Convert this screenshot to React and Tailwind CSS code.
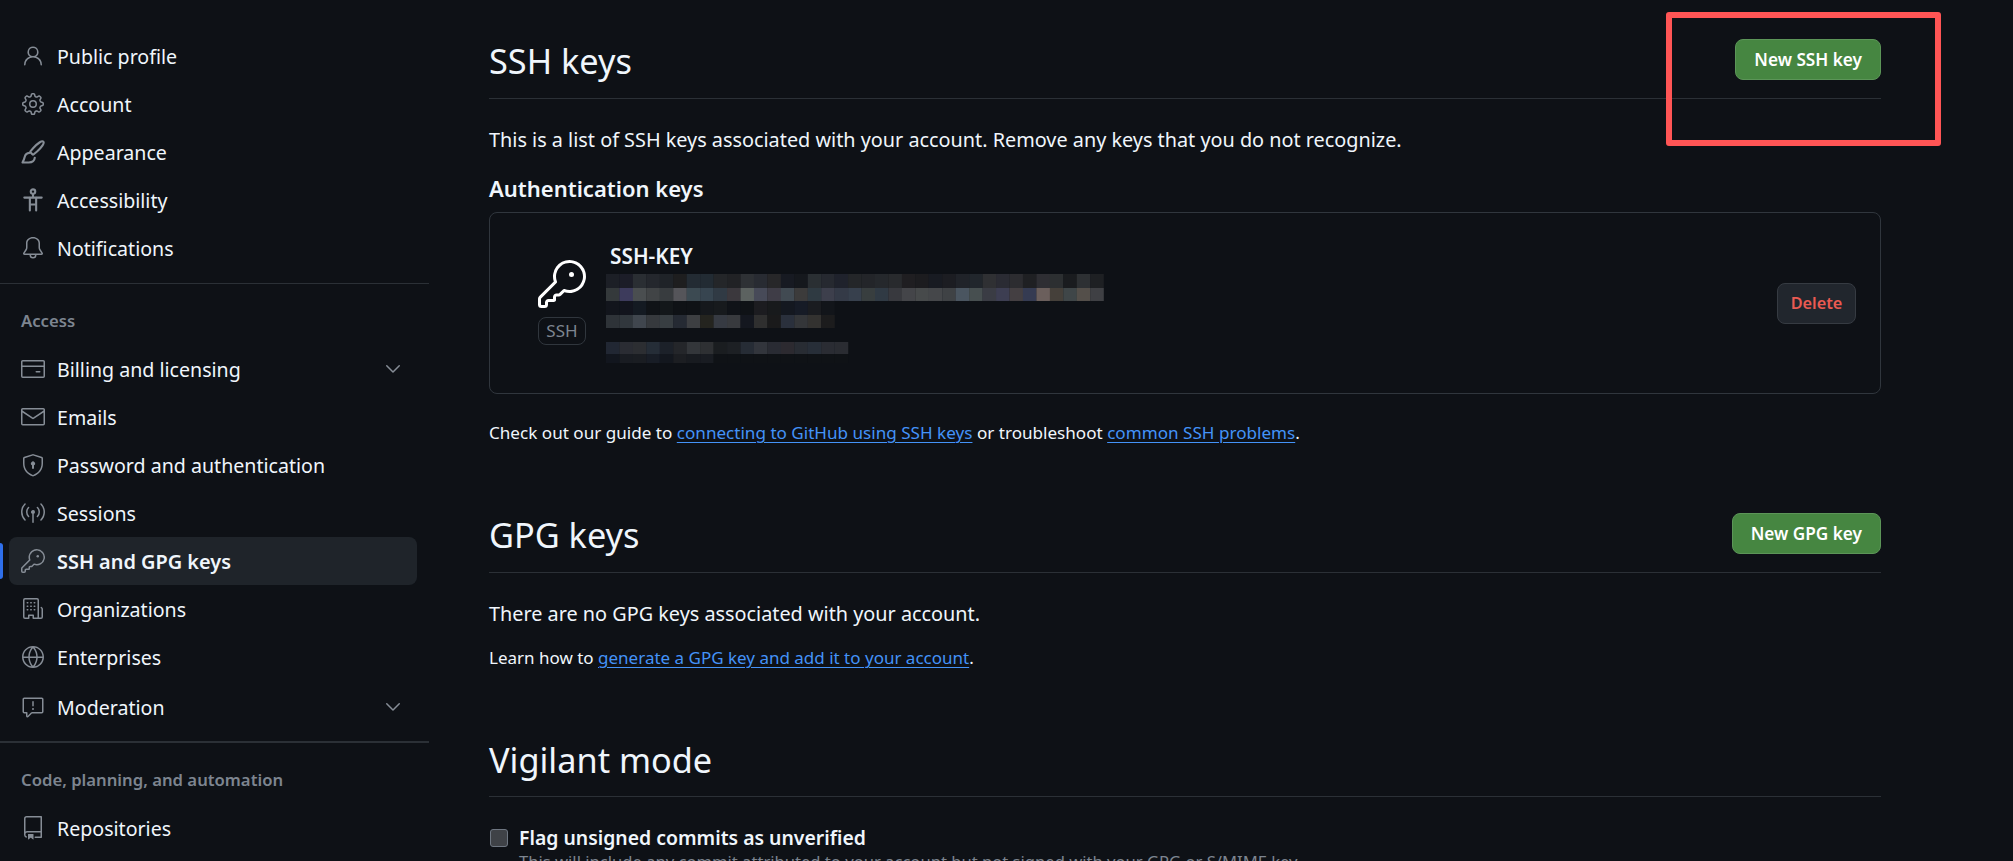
import { GoPerson, GoGear, GoBell, GoCreditCard, GoMail, GoShieldLock, GoBroadcast, GoKey, GoOrganization, GoGlobe, GoReport, GoRepo, GoChevronDown } from 'react-icons/go';

function PaintbrushIcon({ size, className }) {
  return (
    <svg width={size} height={size} viewBox="0 0 16 16" fill="none" stroke="currentColor" strokeWidth="1.4" strokeLinejoin="round" strokeLinecap="round" className={className}>
      <path d="M14.9 1.1c-.9-.9-3.7 1-6.7 4.2L6.4 7.4c-.3.4-.2.7 0 .9l1.2 1.2c.2.2.5.3.9 0l2.2-1.8c3.3-3 5.1-5.7 4.2-6.6Z" />
      <path d="M5.6 8.6c-1.9.2-2.8 1.2-3.2 2.9-.2 1-.6 2-1.4 3.5h4.2c2.4 0 3.8-1.3 4-3.2" />
    </svg>
  );
}

function AccessibilityIcon({ size, className }) {
  return (
    <svg width={size} height={size} viewBox="0 0 16 16" fill="none" stroke="currentColor" strokeWidth="1.4" strokeLinecap="round" className={className}>
      <circle cx="8" cy="2.4" r="1.5" />
      <path d="M2.2 6.4h11.6" />
      <path d="M5.9 6.6V15M10.1 6.6V15M5.9 11h4.2M8 4.2v2" />
    </svg>
  );
}

const TOP_ITEMS = [
  { label: 'Public profile', icon: GoPerson },
  { label: 'Account', icon: GoGear },
  { label: 'Appearance', icon: PaintbrushIcon },
  { label: 'Accessibility', icon: AccessibilityIcon },
  { label: 'Notifications', icon: GoBell },
];

const ACCESS_ITEMS = [
  { label: 'Billing and licensing', icon: GoCreditCard, chevron: true },
  { label: 'Emails', icon: GoMail },
  { label: 'Password and authentication', icon: GoShieldLock },
  { label: 'Sessions', icon: GoBroadcast },
  { label: 'SSH and GPG keys', icon: GoKey, active: true },
  { label: 'Organizations', icon: GoOrganization },
  { label: 'Enterprises', icon: GoGlobe },
  { label: 'Moderation', icon: GoReport, chevron: true, extra: 'mt-[2px]' },
];

// pixelated (redacted) key details
const BLUR_ROWS = [
  { y: 0, h: 14, colors: ['#1c1f26','#1c1d28','#2a2e33','#24272d','#1f2328','#1e1e1f','#232b33','#222b33','#242629','#212225','#2e3135','#282b32','#272729','#171a22','#15181d','#2a2f33','#262930','#1f222c','#242629','#232529','#25282c','#282a2d','#1f1e21','#1c1c1f','#181b22','#1c1d22','#202329','#21262c','#2f3033','#2a2b33','#2c2c30','#1f2023','#2e2e33','#2c2f31','#1a1c1f','#2d3033','#1e2023'] },
  { y: 14, h: 13, colors: ['#34393b','#3d3b5c','#4a4e50','#414446','#383c3f','#55555a','#3c4a52','#374550','#303a44','#3b383d','#5c6260','#474a58','#3f3d47','#414a52','#3c3b3b','#2f3a42','#3d3f4c','#343a47','#37404d','#383e3f','#303a44','#38393e','#444549','#474a4b','#45474a','#3f4245','#4a5560','#474f50','#3a3c44','#3d3e52','#443f42','#353b52','#6b5f5c','#45403a','#3f4648','#544f4a','#3f4044'] },
  { y: 27, h: 14, colors: ['#12151c','#12141d','#141a22','#101317','#13171a','#0f1216','#0f1216','#15181c','#171a1d','#101318','#0f1216','#1c1c20','#181a1c','#141820','#161b26','#1a1c20','#12151a'] },
  { y: 41, h: 13, colors: ['#2e3338','#31373d','#40464e','#36393d','#383e42','#252a33','#3d3f42','#24241f','#363a42','#383a3e','#14171f','#2f2f2f','#1a1a1b','#2a303c','#343639','#333230','#1c1c1d'] },
  { y: 68, h: 12, colors: ['#212733','#2a2c33','#2c2e32','#252d37','#1c2129','#24262a','#33363a','#2e3033','#1a1d20','#1d2024','#262c35','#32353c','#292b33','#2c2a30','#282c33','#272e38','#2a2c33','#2a2c32'] },
  { y: 80, h: 9, colors: ['#12161e','#191c22','#1a1d22','#181d26','#13171e','#1c1e22','#181b20','#191c22','#0f1216','#0f1216','#0f1216','#0f1216','#0f1216','#0f1216','#0f1216','#0f1216','#0f1216','#0f1216'] },
];

function NavItem({ item }) {
  const Icon = item.icon;
  return (
    <div className={`relative h-12 pl-[9px] pr-3 flex items-center ${item.extra || ''}`}>
      {item.active && <div className="absolute left-0 top-[6px] bottom-[6px] w-[3px] rounded-r bg-[#2f6feb]" />}
      <div className={`flex-1 h-12 rounded-lg flex items-center pl-3 pr-3 ${item.active ? 'bg-[#1f242a] font-semibold text-[19.9px]' : ''}`}>
        <Icon size={24} className="text-[#868d96] shrink-0" />
        <span className="ml-3 mt-[2px] flex-1 whitespace-nowrap">{item.label}</span>
        {item.chevron && <GoChevronDown size={24} className="text-[#868d96]" />}
      </div>
    </div>
  );
}

function SectionHeader({ title, children, className = '' }) {
  return (
    <div className={`flex items-center justify-between border-b border-[#2b3036] ${className}`}>
      <h2 className="text-[34.3px] leading-[41px] font-normal relative top-[1px]">{title}</h2>
      {children}
    </div>
  );
}

function GreenButton({ children }) {
  return (
    <button className="h-[41px] px-[18px] rounded-lg bg-[#468641] border border-[#5c9558] text-white text-[17.2px] font-semibold whitespace-nowrap">
      {children}
    </button>
  );
}

function Link({ children }) {
  return <a className="text-[#4493f8] underline underline-offset-[3px] decoration-1">{children}</a>;
}

function App() {
  return (
    <div className="relative h-[861px] overflow-hidden bg-[#0e1116] text-[#f0f6fc] text-[19.6px] font-['Noto_Sans',sans-serif] flex">
      <aside className="w-[429px] shrink-0 pt-8">
        {TOP_ITEMS.map((item) => <NavItem key={item.label} item={item} />)}
        <div className="mt-[11px] border-t border-[#2b3036]" />
        <div className="mt-[27px] mb-[14px] pl-[21px] text-[16.7px] leading-[20px] font-semibold text-[#7d8590]">Access</div>
        {ACCESS_ITEMS.map((item) => <NavItem key={item.label} item={item} />)}
        <div className="mt-[10px] border-t-2 border-[#2b3036]" />
        <div className="mt-[27px] mb-[14px] pl-[21px] text-[16.7px] leading-[20px] font-semibold text-[#7d8590]">Code, planning, and automation</div>
        <NavItem item={{ label: 'Repositories', icon: GoRepo }} />
      </aside>

      <main className="ml-[60px] w-[1392px] shrink-0">
        <SectionHeader title="SSH keys" className="pt-[39px] pb-[18px]">
          <GreenButton>New SSH key</GreenButton>
        </SectionHeader>
        <p className="mt-[29px] text-[19.84px] leading-[24px]">This is a list of SSH keys associated with your account. Remove any keys that you do not recognize.</p>
        <h3 className="mt-[22px] text-[22px] leading-[28px] font-semibold">Authentication keys</h3>

        <div className="mt-[10px] h-[182px] rounded-lg border border-[#30363d] flex items-start">
          <div className="ml-[48px] mt-[47px] w-[48px] flex flex-col items-center">
            <GoKey size={48} className="text-white" />
            <span className="mt-[9px] w-[48px] h-[28px] flex items-center justify-center rounded-lg border border-[#30363d] text-[17px] text-[#7d8590]">SSH</span>
          </div>
          <div className="ml-[20px] mt-[31px] flex-1">
            <div className="ml-[4px] text-[20.8px] leading-[24px] font-semibold">SSH-KEY</div>
            <svg width="498" height="90" className="block mt-[6px]">
              {BLUR_ROWS.map((row) =>
                row.colors.map((c, i) => (
                  <rect key={`${row.y}-${i}`} x={i * 13.45} y={row.y} width="13.6" height={row.h} fill={c} />
                ))
              )}
            </svg>
          </div>
          <button className="mt-[70px] mr-6 w-[79px] h-[41px] rounded-lg bg-[#21262d] border border-[#363b42] text-[#ea5a52] text-[16.3px] font-semibold">Delete</button>
        </div>

        <p className="mt-[27px] text-[17.1px] leading-[24px]">
          Check out our guide to <Link>connecting to GitHub using SSH keys</Link> or troubleshoot <Link>common SSH problems</Link>.
        </p>

        <SectionHeader title="GPG keys" className="mt-[68px] pb-[18px]">
          <GreenButton>New GPG key</GreenButton>
        </SectionHeader>
        <p className="mt-[29px] text-[19.84px] leading-[24px]">There are no GPG keys associated with your account.</p>
        <p className="mt-[20px] text-[17px] leading-[24px]">
          Learn how to <Link>generate a GPG key and add it to your account</Link>.
        </p>

        <SectionHeader title="Vigilant mode" className="mt-[68px] pb-[17px]" />
        <div className="mt-[29px] flex items-center">
          <span className="ml-px w-[18px] h-[18px] rounded-[3px] bg-[#3f4247] border border-[#6e7681]" />
          <span className="ml-[11px] text-[19.4px] leading-[24px] font-semibold">Flag unsigned commits as unverified</span>
        </div>
        <p className="mt-[2px] ml-[30px] text-[16.6px] leading-[20px] text-[#7d8590] whitespace-nowrap">This will include any commit attributed to your account but not signed with your GPG or S/MIME key.</p>
      </main>

      {/* red annotation box */}
      <div className="absolute left-[1666px] top-[12px] w-[275px] h-[134px] border-[6px] border-[#ff5555] rounded-[3px] pointer-events-none" />
    </div>
  );
}

export default App;
